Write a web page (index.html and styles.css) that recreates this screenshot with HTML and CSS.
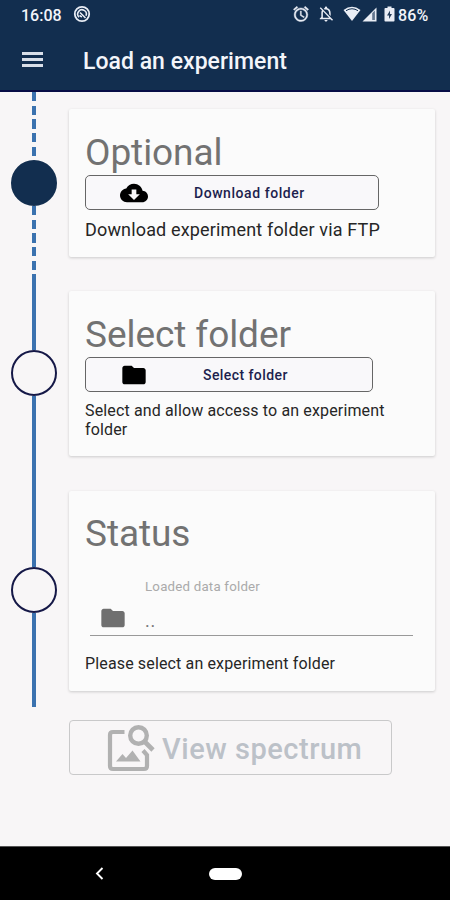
FILE: index.html
```html
<!DOCTYPE html>
<html lang="en">
<head>
<meta charset="utf-8">
<title>Load an experiment</title>
<link rel="stylesheet" href="styles.css">
</head>
<body>
<header class="header">
  <div class="status-bar">
    <span class="clock">16:08</span>
    <svg class="app-icon" width="18" height="18" viewBox="0 0 18 18" fill="none" stroke="#e9edf5"><circle cx="9" cy="9" r="7.2" stroke-width="1.8"/><path d="M6 12.200A4.300 4.300 0 1 1 13 10.800M7 7.500l5.500 5.500M6.800 10.200a2.500 2.500 0 0 0 2.200 1.500" stroke-width="1.6"/></svg>
    <div class="indicators">
      <svg class="alarm" width="16" height="16" viewBox="1.5 1.5 21 21" fill="#e9edf5" stroke="#e9edf5" stroke-width=".5"><path d="M22 5.72l-4.6-3.86-1.29 1.53 4.6 3.86L22 5.72zM7.88 3.39L6.6 1.86 2 5.71l1.29 1.53 4.59-3.85zM12.5 8H11v6l4.75 2.85.75-1.23-4-2.37V8zM12 4c-4.97 0-9 4.03-9 9s4.02 9 9 9a9 9 0 0 0 0-18zm0 16c-3.87 0-7-3.13-7-7s3.13-7 7-7 7 3.13 7 7-3.13 7-7 7z"/></svg>
      <svg class="bell" width="16" height="16" viewBox="2.5 2 19 20.5" fill="#e9edf5"><path d="M20 18.69L7.84 6.14 5.27 3.49 4 4.76l2.8 2.8v.01c-.52.99-.8 2.16-.8 3.42v5l-2 2v1h13.73l2 2L21 19.72l-1-1.03zM12 22c1.11 0 2-.89 2-2h-4c0 1.11.89 2 2 2zm-4-5v-6c0-.7.12-1.35.34-1.93L16 17H8zm10-2.32V11c0-3.08-1.64-5.64-4.5-6.32V4a1.5 1.5 0 0 0-3 0v.68c-.5.12-.97.3-1.4.52l1.5 1.5C13.5 5.8 16 8.100 16 11v1.700z"/></svg>
      <svg class="wifi" width="18" height="16" viewBox="0 0 18 16"><path d="M.5 4Q9-2.500 17.500 4L9 15z" fill="#e9edf5"/><path d="M3 4.700Q9 .8 15 4.700" fill="none" stroke="#122e4f" stroke-width="1"/></svg>
      <svg class="signal" width="15" height="15" viewBox="0 0 15 15"><path d="M14.500.5v14H.5z" fill="#e9edf5"/><path d="M10.200 6.200l2.700-2.700v9.500h-2.700z" fill="#63768f"/></svg>
      <svg class="battery" width="11" height="16" viewBox="0 0 11 16"><path d="M3.500.5h4v1.600h2.200q.8 0 .8.800v11.800q0 .8-.8.800H1.300q-.8 0-.8-.8V2.900q0-.8.8-.8h2.200z" fill="#e9edf5"/><path d="M6 4.500L3 9.500h2v3.500l3-5H6z" fill="#253e5c"/></svg>
      <span class="percent">86%</span>
    </div>
  </div>
  <div class="toolbar">
    <div class="menu"><i></i><i></i><i></i></div>
    <h1>Load an experiment</h1>
  </div>
</header>
<main>
  <section class="step step-download">
    <div class="rail"><span class="line dashed"></span><span class="dot filled"></span><span class="line dashed"></span></div>
    <div class="card">
      <h2>Optional</h2>
      <button class="action">
        <svg width="28" height="28" viewBox="0 0 24 24"><path d="M19.350 10.040C18.670 6.590 15.640 4 12 4 9.110 4 6.600 5.640 5.350 8.040 2.340 8.360 0 10.910 0 14c0 3.310 2.690 6 6 6h13c2.760 0 5-2.240 5-5 0-2.640-2.050-4.780-4.650-4.960zM17 13l-5 5-5-5h3V9h4v4h3z"/></svg>
        <span>Download folder</span>
      </button>
      <p>Download experiment folder via FTP</p>
    </div>
  </section>
  <section class="step step-select">
    <div class="rail"><span class="line"></span><span class="dot"></span><span class="line"></span></div>
    <div class="card">
      <h2>Select folder</h2>
      <button class="action">
        <svg width="28" height="28" viewBox="0 0 24 24"><path d="M10 4H4c-1.100 0-1.990.9-1.990 2L2 18c0 1.100.9 2 2 2h16c1.100 0 2-.9 2-2V8c0-1.100-.9-2-2-2h-8l-2-2z"/></svg>
        <span>Select folder</span>
      </button>
      <p>Select and allow access to an experiment folder</p>
    </div>
  </section>
  <section class="step step-status">
    <div class="rail"><span class="line"></span><span class="dot"></span><span class="line"></span></div>
    <div class="card">
      <h2>Status</h2>
      <div class="field">
        <svg width="28" height="28" viewBox="0 0 24 24" fill="#6f6f6f"><path d="M10 4H4c-1.100 0-1.990.9-1.990 2L2 18c0 1.100.9 2 2 2h16c1.100 0 2-.9 2-2V8c0-1.100-.9-2-2-2h-8l-2-2z"/></svg>
        <div class="field-text"><label>Loaded data folder</label><span class="value">..</span></div>
      </div>
      <p>Please select an experiment folder</p>
    </div>
  </section>
  <button class="view" disabled>
    <svg width="48" height="48" viewBox="0 0 48 48" fill="none" stroke="#b1b1b1"><path d="M17.500 8H6Q3 8 3 11V42Q3 45 6 45H37Q40 45 40 42V31L36 26.500" stroke-width="4.200"/><circle cx="31.500" cy="11.500" r="8.300" stroke-width="4.400"/><path d="M37.500 17.500L46 26" stroke-width="4.600"/><path d="M9 37.500l6.500-7.500 3.500 4 6.500-7.500 8 11z" fill="#b1b1b1" stroke="none"/></svg>
    <span>View spectrum</span>
  </button>
</main>
<nav class="nav">
  <svg width="9" height="13" viewBox="0 0 9 13"><path d="M7.500 1L2 6.500 7.500 12" fill="none" stroke="#fff" stroke-width="1.900"/></svg>
  <span class="home"></span>
</nav>
</body>
</html>
```

FILE: styles.css
```css
* { box-sizing: border-box; }
body {
  margin: 0;
  width: 450px;
  height: 900px;
  display: flex;
  flex-direction: column;
  overflow: hidden;
  background: #f8f6f7;
  font-family: Roboto, "Liberation Sans", sans-serif;
}
h1, h2, p { margin: 0; font-weight: 400; white-space: nowrap; }
svg { display: block; flex: none; }
button { font-family: inherit; background: none; padding: 0; display: flex; align-items: center; }

.header { height: 92px; flex: none; background: #122e4f; border-bottom: 2px solid #080d46; color: #f3f5fa; }
.status-bar { height: 30px; display: flex; align-items: center; padding-left: 21px; font-size: 16px; font-weight: 500; }
.clock { width: 41px; }
.app-icon { margin-left: 11px; margin-top: -2px; }
.indicators { display: flex; align-items: center; margin-left: 202px; }
.alarm, .bell, .wifi, .signal, .battery { margin-top: -2px; }
.bell { margin-left: 9px; }
.wifi { margin-left: 9px; }
.signal { margin-left: 1px; }
.battery { margin-left: 7px; }
.percent { margin-left: 3px; letter-spacing: .2px; }
.toolbar { height: 60px; display: flex; align-items: center; padding-left: 22px; }
.menu { width: 21px; display: flex; flex-direction: column; gap: 3px; margin-top: -1px; }
.menu i { height: 3px; background: #d9dfe9; }
h1 { margin-left: 40px; margin-top: 3px; font-size: 23px; font-weight: 500; letter-spacing: .03px; }

main { flex: 1; }
.step { display: flex; }
.step-download { height: 182px; }
.step-select { height: 198px; }
.step-status { height: 235px; }
.rail { width: 46px; margin-left: 11px; display: flex; flex-direction: column; align-items: center; }
.line { width: 3.500px; flex: 1; background: #3b72af; }
.dashed { background: repeating-linear-gradient(#3b72af 0 9.200px, transparent 9.200px 13.700px); }
.dot { width: 46px; height: 46px; flex: none; border: 2px solid #151847; border-radius: 50%; }
.filled { background: #122e4f; border-color: #122e4f; }
.card {
  width: 366px;
  margin: 17px 0 17px 12px;
  padding: 21px 16px 0;
  background: #fbfbfb;
  border-radius: 2px;
  box-shadow: 0 1px 3px rgba(0,0,0,.18);
}
.step-select .card { margin-bottom: 16px; }
.step-status .card { margin: 19px 0 16px 12px; padding-top: 20px; }
h2 { color: #727272; font-size: 37px; line-height: 46px; letter-spacing: -.07px; }
.action { height: 35px; margin-top: -1px; border: 1px solid #666; border-radius: 5px; background: #f9f8fa; padding-left: 34px; color: #1d1f4e; font-size: 14px; font-weight: 500; }
.step-download .action { width: 294px; }
.step-download .action span { margin-left: 46px; letter-spacing: .55px; }
.step-select .action { width: 288px; }
.step-select .action span { margin-left: 55px; letter-spacing: .43px; }
.card p { color: #262626; font-size: 16px; line-height: 19px; white-space: normal; letter-spacing: .14px; }
.step-download .card p { margin-top: 10px; font-size: 18px; letter-spacing: .16px; }
.step-select .card p { margin-top: 9px; }
.field { display: flex; align-items: flex-end; width: 323px; height: 79px; margin-left: 5px; padding: 0 0 3px 9px; border-bottom: 1.500px solid #999; }
.field-text { display: flex; flex-direction: column; margin-left: 18px; }
.field label { color: #aaa; font-size: 13.300px; line-height: 16px; margin-bottom: 16px; letter-spacing: .2px; }
.value { color: #777; font-size: 18px; line-height: 20px; letter-spacing: .8px; margin-bottom: 1px; }
.step-status .card p { margin-top: 18px; }

.view { width: 323px; height: 55px; margin: 13px 0 0 69px; padding-left: 37px; border: 1.500px solid #c9c9ca; border-radius: 4px; color: #bcc1c8; font-size: 29px; font-weight: 500; }
.view span { margin-left: 7px; padding-top: 3px; letter-spacing: .52px; }

.nav { height: 54px; flex: none; display: flex; align-items: center; background: #000; border-top: 1px solid #555; padding-left: 95px; }
.home { width: 33px; height: 12px; margin-left: 105px; border-radius: 6px; background: #fff; }
```
